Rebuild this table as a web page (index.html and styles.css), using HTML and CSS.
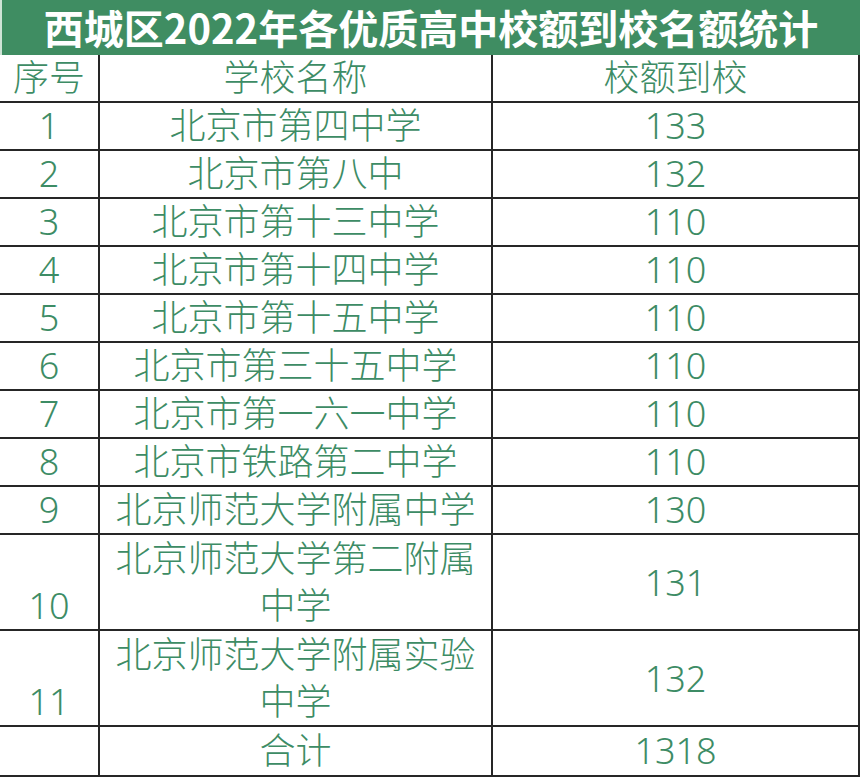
FILE: index.html
```html
<!DOCTYPE html>
<html lang="zh">
<head>
<meta charset="utf-8">
<link rel="stylesheet" href="styles.css">
</head>
<body>
<div class="sheet">
  <div class="title">西城区2022年各优质高中校额到校名额统计</div>
  <table class="quota">
    <colgroup><col class="c-no"><col class="c-name"><col class="c-num"></colgroup>
    <thead>
      <tr><th class="no">序号</th><th>学校名称</th><th>校额到校</th></tr>
    </thead>
    <tbody>
      <tr><td class="no">1</td><td>北京市第四中学</td><td>133</td></tr>
      <tr><td class="no">2</td><td>北京市第八中</td><td>132</td></tr>
      <tr><td class="no">3</td><td>北京市第十三中学</td><td>110</td></tr>
      <tr><td class="no">4</td><td>北京市第十四中学</td><td>110</td></tr>
      <tr><td class="no">5</td><td>北京市第十五中学</td><td>110</td></tr>
      <tr><td class="no">6</td><td>北京市第三十五中学</td><td>110</td></tr>
      <tr><td class="no">7</td><td>北京市第一六一中学</td><td>110</td></tr>
      <tr><td class="no">8</td><td>北京市铁路第二中学</td><td>110</td></tr>
      <tr><td class="no">9</td><td>北京师范大学附属中学</td><td>130</td></tr>
      <tr class="tall"><td class="no">10</td><td>北京师范大学第二附属<br>中学</td><td>131</td></tr>
      <tr class="tall"><td class="no">11</td><td>北京师范大学附属实验<br>中学</td><td>132</td></tr>
      <tr class="total"><td class="no"></td><td>合计</td><td>1318</td></tr>
    </tbody>
  </table>
</div>
</body>
</html>
```
FILE: styles.css
```css
html, body {
  margin: 0;
  padding: 0;
  background: #ffffff;
}
.sheet {
  width: 860px;
  font-family: "Noto Sans", "Noto Sans CJK SC", sans-serif;
}
.title {
  height: 55px;
  background: #3f8d62;
  color: #ffffff;
  font-family: "Noto Sans CJK SC", sans-serif;
  font-weight: 700;
  font-size: 40px;
  line-height: 55px;
  text-align: center;
  border-left: 2px solid #cfe3d6;
  box-sizing: border-box;
}
.quota {
  width: 859px;
  border-collapse: collapse;
  table-layout: fixed;
  color: #3d8c65;
  font-size: 36px;
  font-weight: 300;
}
.c-no { width: 99px; }
.c-name { width: 393px; }
.c-num { width: 367px; }
.quota th, .quota td {
  border: 2px solid #262626;
  padding: 0;
  text-align: center;
  vertical-align: middle;
  line-height: 46px;
  font-weight: 300;
  white-space: nowrap;
}
.quota tr:first-child th {
  border-top: none;
}
.quota .no {
  border-left: none;
  vertical-align: bottom;
}
.quota .tall td {
  line-height: 47px;
}
.quota .total td {
  line-height: 48px;
}
```
